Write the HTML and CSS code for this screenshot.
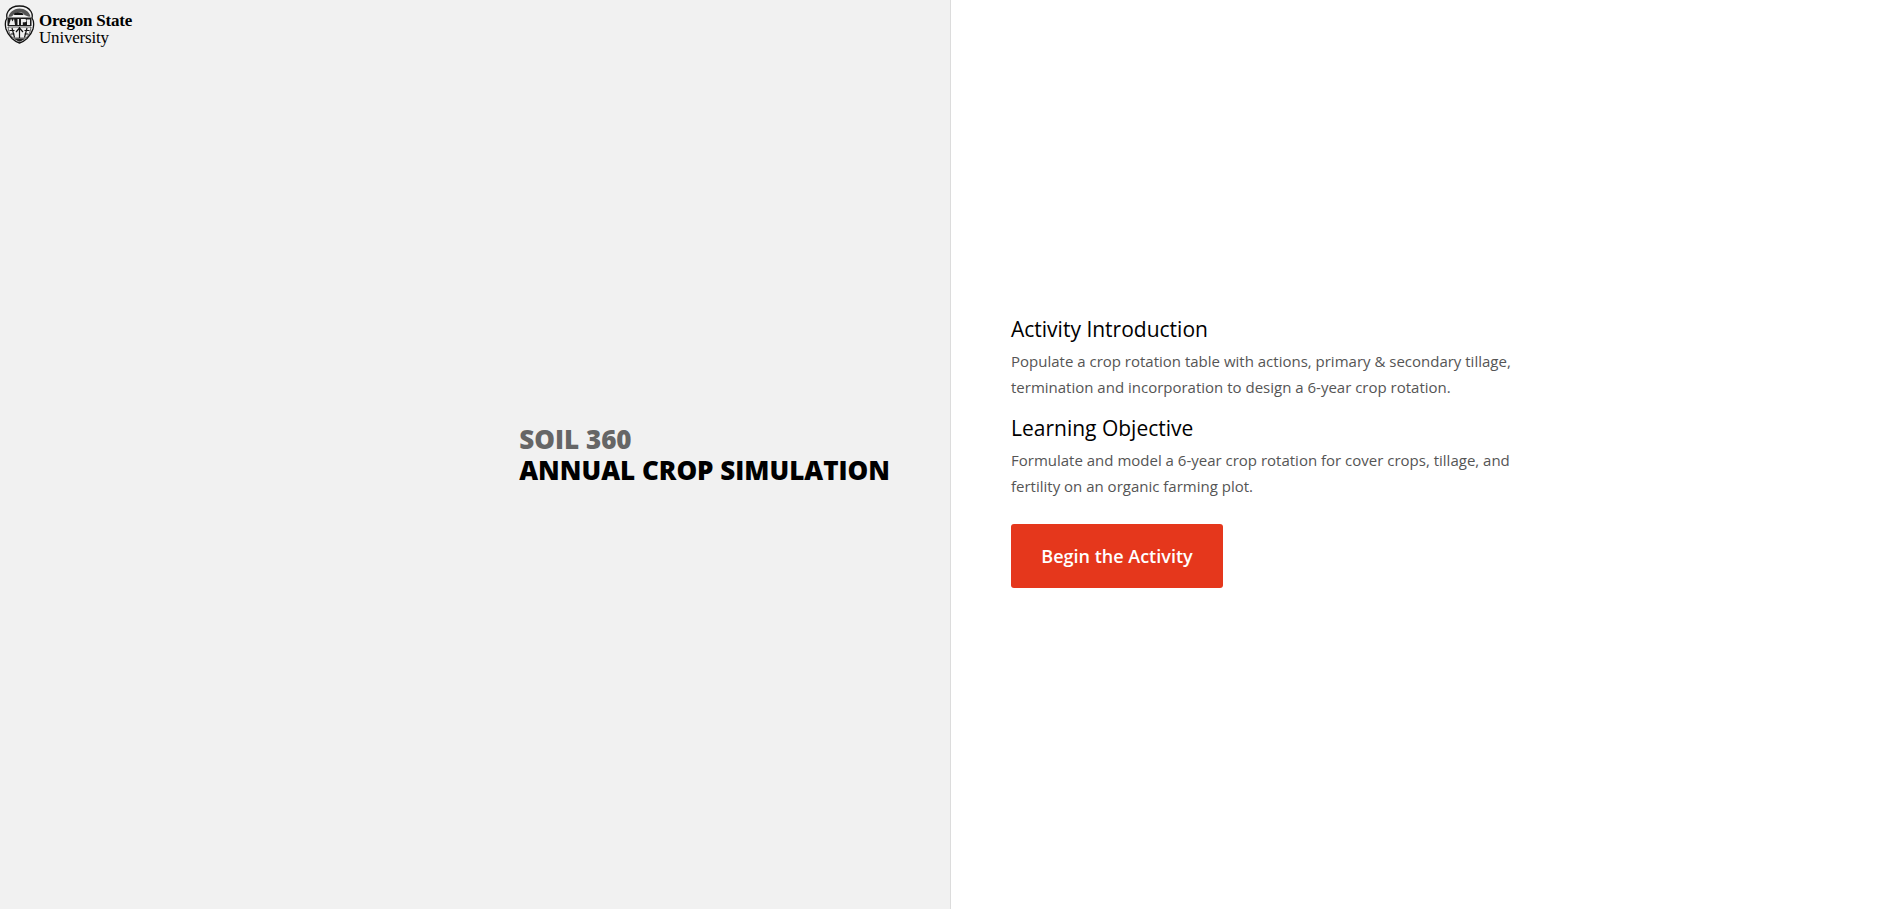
FILE: index.html
```html
<!DOCTYPE html>
<html lang="en">
<head>
<meta charset="utf-8">
<title>Annual Crop Simulation</title>
<link rel="stylesheet" href="styles.css">
</head>
<body>
<main class="page">
  <div class="logo">
    <svg class="crest" width="31" height="39" viewBox="0 0 31 39" aria-hidden="true">
      <path d="M15.500 1C10 1 6 3 4 6.500 2.500 9 2.500 11 3 13 1 16 1 20 2 24c1.500 5 3.500 7 6 9.500 2.500 2.300 5 3.800 7.500 4.500 2.500-.7 5-2.200 7.500-4.500 2.500-2.500 4.500-4.500 6-9.500 1-4 1-8-1-11 .5-2 .5-4-1-6.500C25 3 21 1 15.500 1z" fill="#f1f1f1" stroke="#111" stroke-width="1.300"/>
      <path d="M4.500 12c.5-4 5-8.500 11-8.500 5 0 10 3 11 8-2 .5-4-.5-6-1.500-1-2-3-3-6-3-3 .5-5 2-6 4-1 1-3 .5-4 1z" fill="#555"/>
      <path d="M9.500 9c2-2 5.500-2.500 8.500-1 1.500.7 2 1.500 1 2H10.500z" fill="#111"/>
      <rect x="3.500" y="12.500" width="24" height="8.500" fill="#1a1a1a"/>
      <path d="M5 20l2-6.500 1.500 3 1.500-3 1 6.500zM13.500 14h1.500v6h-1.500zM17 14h4c2 0 2 3.200 0 3.200h-2.200V20H17zM23 14.500h3V20h-3z" fill="#eee"/>
      <path d="M4 22h23c-.3 4.500-2 8-5 11h-13C6 30 4.300 26.500 4 22z" fill="#eee" stroke="#222" stroke-width=".7"/>
      <path d="M15.500 22v11M12 27l3.500-4 3.500 4M8 23l2.500 9.500M23 23l-2.500 9.500M5.500 25.500h5M20.500 25.500h5M7 29h3.500M20.500 29H24" stroke="#111" stroke-width="1.200" fill="none"/>
      <path d="M10 33.500c2 1.700 3.800 2.800 5.500 3.300 1.700-.5 3.500-1.600 5.500-3.300z" fill="#222"/>
    </svg>
    <div class="wordmark"><span class="wm-bold">Oregon State</span><span class="wm-light">University</span></div>
  </div>
  <section class="intro">
    <h1 class="title"><span class="course">SOIL 360</span><span class="name">ANNUAL CROP SIMULATION</span></h1>
  </section>
  <section class="details">
    <h2 class="sub">Activity Introduction</h2>
    <p class="copy">Populate a crop rotation table with actions, primary &amp; secondary tillage, termination and incorporation to design a 6-year crop rotation.</p>
    <h2 class="sub">Learning Objective</h2>
    <p class="copy">Formulate and model a 6-year crop rotation for cover crops, tillage, and fertility on an organic farming plot.</p>
    <button class="begin" type="button">Begin the Activity</button>
  </section>
</main>
</body>
</html>
```
FILE: styles.css
```css
* { box-sizing: border-box; }
html, body { margin: 0; height: 100%; }
body { font-family: "Open Sans", "Liberation Sans", sans-serif; background: #fff; overflow: hidden; }
.page { display: flex; height: 909px; position: relative; }
.logo { position: absolute; top: 5px; left: 4px; display: flex; align-items: flex-start; gap: 4px; color: #000; }
.crest { display: block; }
.wordmark { display: flex; flex-direction: column; padding-top: 7px; font-family: "Liberation Serif", serif; font-size: 17px; line-height: 17px; letter-spacing: -0.2px; }
.wm-bold { font-weight: 700; }
.wm-light { font-weight: 400; }
.intro { width: 951px; flex: none; background: #f1f1f1; border-right: 1px solid #dcdcdc; display: flex; align-items: center; justify-content: flex-end; padding-right: 60px; }
.title { margin: 0; font-size: 26px; line-height: 31px; font-weight: 800; display: flex; flex-direction: column; }
.course { color: #666; }
.name { color: #000; }
.details { flex: 1; display: flex; flex-direction: column; justify-content: center; align-items: flex-start; padding-left: 60px; }
.sub { margin: 0 0 5px; font-size: 21px; line-height: 27px; font-weight: 500; color: #000; }
.copy { margin: 0 0 15px; width: 520px; font-size: 15px; line-height: 26px; color: #555; }
.begin { margin: 10px 0 6px; width: 212px; height: 64px; border: 0; border-radius: 3px; background: #e5371c; color: #fff; font: 600 18px "Open Sans", sans-serif; }
```
